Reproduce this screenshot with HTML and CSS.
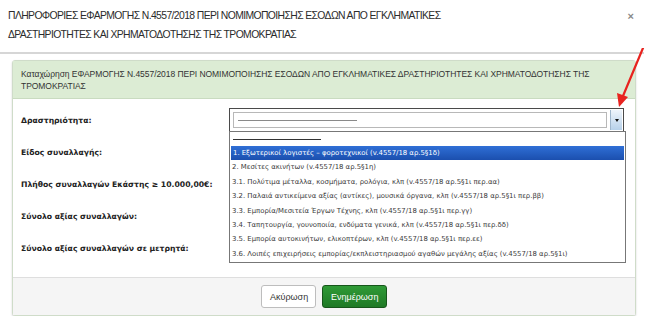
FILE: index.html
```html
<!DOCTYPE html>
<html lang="el">
<head>
    <meta charset="UTF-8">
    <title>Ν.4557/2018</title>
    <link rel="stylesheet" href="styles.css">
</head>
<body class="page">
<div class="modal">
    <div class="modal-header">
        <h4 class="modal-title">ΠΛΗΡΟΦΟΡΙΕΣ ΕΦΑΡΜΟΓΗΣ Ν.4557/2018 ΠΕΡΙ ΝΟΜΙΜΟΠΟΙΗΣΗΣ ΕΣΟΔΩΝ ΑΠΟ ΕΓΚΛΗΜΑΤΙΚΕΣ<br>ΔΡΑΣΤΗΡΙΟΤΗΤΕΣ ΚΑΙ ΧΡΗΜΑΤΟΔΟΤΗΣΗΣ ΤΗΣ ΤΡΟΜΟΚΡΑΤΙΑΣ</h4>
        <span class="close">×</span>
    </div>
    <div class="modal-body">
        <div class="panel">
            <div class="panel-heading">
                Καταχώρηση ΕΦΑΡΜΟΓΗΣ Ν.4557/2018 ΠΕΡΙ ΝΟΜΙΜΟΠΟΙΗΣΗΣ ΕΣΟΔΩΝ ΑΠΟ ΕΓΚΛΗΜΑΤΙΚΕΣ ΔΡΑΣΤΗΡΙΟΤΗΤΕΣ ΚΑΙ ΧΡΗΜΑΤΟΔΟΤΗΣΗΣ ΤΗΣ ΤΡΟΜΟΚΡΑΤΙΑΣ
            </div>
            <div class="panel-body">
                <div class="form-row">
                    <label class="form-label">Δραστηριότητα:</label>
                    <div class="select">
                        <div class="select-value"><span class="select-line"></span></div>
                        <div class="select-btn"><span class="caret"></span></div>
                        <ul class="select-list">
                            <li class="opt-empty"><span class="select-line"></span></li>
                            <li class="opt active">1. Εξωτερικοί λογιστές – φοροτεχνικοί (v.4557/18 αρ.5§1δ)</li>
                            <li class="opt">2. Μεσίτες ακινήτων (v.4557/18 αρ.5§1η)</li>
                            <li class="opt">3.1. Πολύτιμα μέταλλα, κοσμήματα, ρολόγια, κλπ (v.4557/18 αρ.5§1ι περ.αα)</li>
                            <li class="opt">3.2. Παλαιά αντικείμενα αξίας (αντίκες), μουσικά όργανα, κλπ (v.4557/18 αρ.5§1ι περ.ββ)</li>
                            <li class="opt">3.3. Εμπορία/Μεσιτεία Έργων Τέχνης, κλπ (v.4557/18 αρ.5§1ι περ.γγ)</li>
                            <li class="opt">3.4. Ταπητουργία, γουνοποιία, ενδύματα γενικά, κλπ (v.4557/18 αρ.5§1ι περ.δδ)</li>
                            <li class="opt">3.5. Εμπορία αυτοκινήτων, ελικοπτέρων, κλπ (v.4557/18 αρ.5§1ι περ.εε)</li>
                            <li class="opt">3.6. Λοιπές επιχειρήσεις εμπορίας/εκπλειστηριασμού αγαθών μεγάλης αξίας (v.4557/18 αρ.5§1ι)</li>
                        </ul>
                    </div>
                </div>
                <div class="form-row">
                    <label class="form-label">Είδος συναλλαγής:</label>
                </div>
                <div class="form-row">
                    <label class="form-label">Πλήθος συναλλαγών Εκάστης ≥ 10.000,00€:</label>
                </div>
                <div class="form-row">
                    <label class="form-label">Σύνολο αξίας συναλλαγών:</label>
                </div>
                <div class="form-row">
                    <label class="form-label">Σύνολο αξίας συναλλαγών σε μετρητά:</label>
                </div>
            </div>
            <div class="panel-footer">
                <button class="btn btn-default">Ακύρωση</button>
                <button class="btn btn-success">Ενημέρωση</button>
            </div>
        </div>
    </div>

    <!-- κόκκινο βέλος προς το κουμπί του dropdown -->
    <svg class="arrow" width="40" height="70" viewBox="0 0 40 70">
        <line x1="33" y1="0" x2="13" y2="48" stroke="#e8231f" stroke-width="2.2" stroke-linecap="round"/>
        <polygon points="7,45 18,49 9,59" fill="#e8231f"/>
    </svg>
</div>
</body>
</html>
```

FILE: styles.css
```css
body {
    margin: 0;
    background: #fff;
    font-family: "Liberation Sans", Arial, sans-serif;
    color: #333;
}

.modal {
    position: relative;
    width: 644px;
}

.modal-header {
    display: flex;
    justify-content: space-between;
    align-items: flex-start;
    padding: 6px 10px 8px 8px;
    border-bottom: 2px solid #d6d6d6;
}

.modal-title {
    margin: 0;
    font-size: 10.4px;
    font-weight: normal;
    letter-spacing: -0.62px;
    line-height: 19px;
    color: #2b2b2b;
}

.close {
    font-size: 11px;
    font-weight: bold;
    color: #888;
    line-height: 19px;
    margin-top: 1px;
}

.modal-body {
    padding: 6px 8px 0 12px;
}

.panel {
    border: 1px solid #cfdcc9;
    border-radius: 3px;
    box-shadow: 0 1px 2px rgba(0, 0, 0, 0.18);
    background: #fff;
}

.panel-heading {
    background: #dcecd4;
    border-bottom: 1px solid #c9dbc0;
    padding: 7px 8px 6px 8px;
    font-size: 8.5px;
    letter-spacing: -0.05px;
    line-height: 12px;
    color: #333;
}

.panel-body {
    padding: 5px 11px 13px 8px;
}

.form-row {
    display: grid;
    grid-template-columns: 208px 1fr;
    align-items: center;
    height: 32px;
}

.form-label {
    font-family: "DejaVu Sans", Verdana, sans-serif;
    font-weight: bold;
    font-size: 7.7px;
    color: #222;
}

.select {
    position: relative;
    height: 22px;
    border: 1px solid #4a4a4a;
    display: flex;
    align-items: center;
    padding: 0 1px 0 3px;
    background: #fff;
}

.select-value {
    flex: 1;
    height: 14px;
    border: 1px solid #b8b8b8;
    display: flex;
    align-items: center;
    padding-left: 4px;
}

.select-line {
    display: block;
    width: 119px;
    height: 1px;
    background: #8a8a8a;
}

.select-btn {
    width: 11px;
    height: 20px;
    margin-left: 3px;
    background: linear-gradient(#eef4fb, #b7d1ea);
    border-left: 1px solid #9fb6cc;
    display: flex;
    align-items: center;
    justify-content: center;
}

.caret {
    width: 0;
    height: 0;
    border-left: 2.5px solid transparent;
    border-right: 2.5px solid transparent;
    border-top: 3px solid #111;
}

.select-list {
    position: absolute;
    top: 100%;
    left: -1px;
    width: 395px;
    margin: 0;
    padding: 0 0 1px 0;
    list-style: none;
    background: #fff;
    border: 1px solid #777;
    font-family: "DejaVu Sans", Verdana, sans-serif;
    font-size: 6.9px;
    color: #3a3a3a;
    z-index: 2;
}

.opt-empty {
    height: 14px;
    display: flex;
    align-items: center;
    padding-left: 3px;
}

.opt-empty .select-line {
    width: 88px;
    background: #333;
}

.opt {
    height: 14.4px;
    line-height: 14.4px;
    padding-left: 2px;
    white-space: nowrap;
}

.opt.active {
    background: linear-gradient(#2f6fd6, #1b4fae);
    color: #fff;
    margin: 0 1px;
}

.panel-footer {
    display: flex;
    justify-content: center;
    gap: 6px;
    padding: 7px 0;
    background: #f5f5f5;
    border-top: 1px solid #dedede;
}

.btn {
    height: 23px;
    padding: 0 8px;
    border-radius: 3px;
    font-family: "Liberation Sans", Arial, sans-serif;
    font-size: 9px;
    cursor: pointer;
}

.btn-default {
    width: 55px;
    background: #fff;
    border: 1px solid #bdbdbd;
    color: #333;
}

.btn-success {
    width: 65px;
    background: linear-gradient(#2f9a36, #1f7a26);
    border: 1px solid #17561b;
    color: #fff;
}

.arrow {
    position: absolute;
    top: 48px;
    left: 610px;
}
```
